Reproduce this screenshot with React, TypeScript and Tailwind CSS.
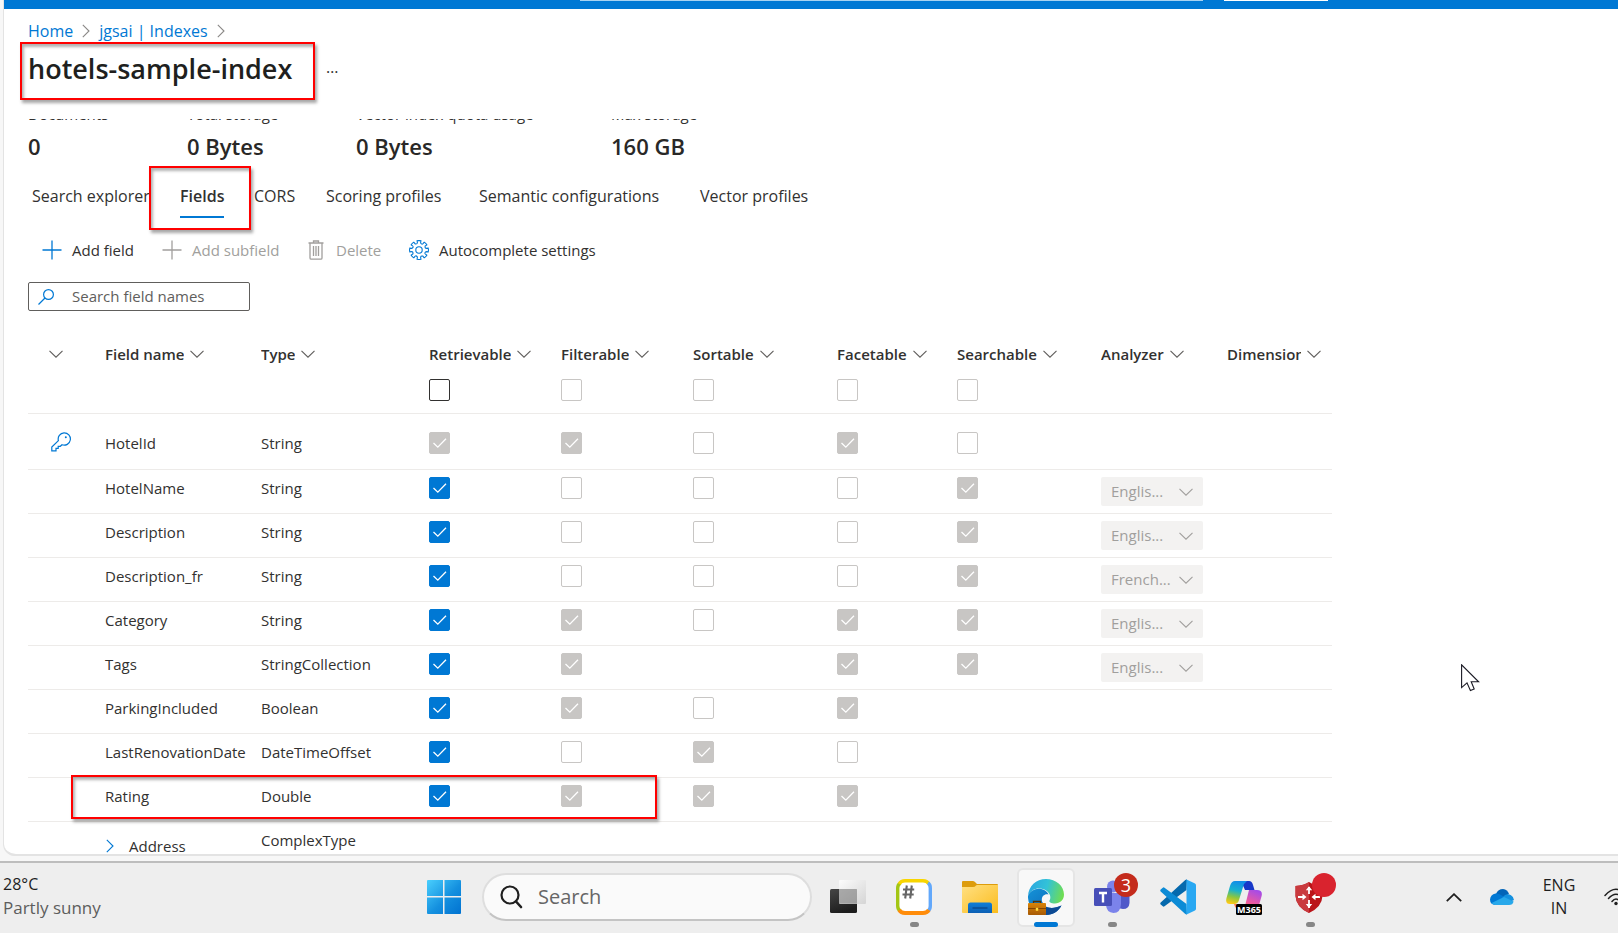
import { useState } from 'react';
import type { ReactNode } from 'react';

type CheckState = 'on' | 'off' | 'locked-on' | 'locked-off' | 'none';

interface Field {
  name: string;
  type: string;
  // retrievable, filterable, sortable, facetable, searchable
  flags: CheckState[];
  analyzer?: string;
  isKey?: boolean;
}

const FLAG_NAMES = ['Retrievable', 'Filterable', 'Sortable', 'Facetable', 'Searchable'];

const FIELDS: Field[] = [
  { name: 'HotelId', type: 'String', flags: ['locked-on', 'locked-on', 'locked-off', 'locked-on', 'locked-off'], isKey: true },
  { name: 'HotelName', type: 'String', flags: ['on', 'locked-off', 'locked-off', 'locked-off', 'locked-on'], analyzer: 'Englis...' },
  { name: 'Description', type: 'String', flags: ['on', 'locked-off', 'locked-off', 'locked-off', 'locked-on'], analyzer: 'Englis...' },
  { name: 'Description_fr', type: 'String', flags: ['on', 'locked-off', 'locked-off', 'locked-off', 'locked-on'], analyzer: 'French...' },
  { name: 'Category', type: 'String', flags: ['on', 'locked-on', 'locked-off', 'locked-on', 'locked-on'], analyzer: 'Englis...' },
  { name: 'Tags', type: 'StringCollection', flags: ['on', 'locked-on', 'none', 'locked-on', 'locked-on'], analyzer: 'Englis...' },
  { name: 'ParkingIncluded', type: 'Boolean', flags: ['on', 'locked-on', 'locked-off', 'locked-on', 'none'] },
  { name: 'LastRenovationDate', type: 'DateTimeOffset', flags: ['on', 'locked-off', 'locked-on', 'locked-off', 'none'] },
  { name: 'Rating', type: 'Double', flags: ['on', 'locked-on', 'locked-on', 'locked-on', 'none'] },
];

const STATS = [
  { label: 'Documents', value: '0' },
  { label: 'Total storage', value: '0 Bytes' },
  { label: 'Vector index quota usage', value: '0 Bytes' },
  { label: 'Max storage', value: '160 GB' },
];

const TABS = ['Search explorer', 'Fields', 'CORS', 'Scoring profiles', 'Semantic configurations', 'Vector profiles'];

function ChevronDown({ className = 'text-[#605e5c]' }: { className?: string }) {
  return (
    <svg viewBox="0 0 14 8" className={`w-3.5 h-2 shrink-0 ${className}`} fill="none" stroke="currentColor" strokeWidth="1.1">
      <path d="M0.5 0.8 L7 7.2 L13.5 0.8" />
    </svg>
  );
}

function ChevronRight({ className }: { className: string }) {
  return (
    <svg viewBox="0 0 8 14" className={`w-2 h-3.5 shrink-0 ${className}`} fill="none" stroke="currentColor" strokeWidth="1.1">
      <path d="M0.8 0.8 L7 7 L0.8 13.2" />
    </svg>
  );
}

function Highlight({ className }: { className: string }) {
  return (
    <div
      className={`absolute z-10 pointer-events-none border-2 border-[#ff0000] shadow-[2px_3px_3px_rgba(0,0,0,0.35),inset_2px_3px_3px_rgba(0,0,0,0.3)] ${className}`}
    />
  );
}

function CheckBox({ state, label }: { state: CheckState; label: string }) {
  const [checked, setChecked] = useState(state === 'on' || state === 'locked-on');
  const locked = state === 'locked-on' || state === 'locked-off';
  return (
    <label className="relative block w-[21px] h-[22px]">
      <input
        type="checkbox"
        aria-label={label}
        checked={checked}
        disabled={locked}
        onChange={() => setChecked(!checked)}
        className="appearance-none block w-[21px] h-[22px] rounded-xs border border-[#323130] bg-white checked:bg-[#0078d4] checked:border-[#0078d4] disabled:border-[#c8c6c4] disabled:checked:bg-[#c8c6c4] disabled:checked:border-[#c8c6c4]"
      />
      {checked && (
        <svg viewBox="0 0 21 22" className="absolute inset-0 pointer-events-none" fill="none" stroke="white" strokeWidth="1.3">
          <path d="M4.5 11 L8.8 15.2 L17 6.8" />
        </svg>
      )}
    </label>
  );
}

function HeaderCell({ children }: { children?: ReactNode }) {
  return (
    <div className="flex items-center gap-1.5 h-[22px]">
      {children && <span className="overflow-hidden whitespace-nowrap">{children}</span>}
      <ChevronDown />
    </div>
  );
}

function KeyIcon() {
  return (
    <svg viewBox="0 0 20 20" className="w-5 h-5 text-[#0078d4]" fill="none" stroke="currentColor" strokeWidth="1.2">
      <path d="M13 0.8 a6.2 6.2 0 1 1 -2 12 L9.3 14.3 H7.2 V16.4 H5 V18.8 H0.8 V15 L7.4 8.6 A6.2 6.2 0 0 1 13 0.8 Z" />
      <circle cx="14.8" cy="5.2" r="1" fill="currentColor" stroke="none" />
    </svg>
  );
}

function PlusIcon() {
  return (
    <svg viewBox="0 0 20 20" className="w-5 h-5" fill="none" stroke="currentColor" strokeWidth="1.3">
      <path d="M10 0.5 V19.5 M0.5 10 H19.5" />
    </svg>
  );
}

function TrashIcon() {
  return (
    <svg viewBox="0 0 16 20" className="w-4 h-5" fill="none" stroke="currentColor" strokeWidth="1.3">
      <path d="M0.5 3 H15.5 M5.5 3 V1 H10.5 V3 M2 3 V18 Q2 19.2 3.2 19.2 H12.8 Q14 19.2 14 18 V3 M5.5 6 V16 M8 6 V16 M10.5 6 V16" />
    </svg>
  );
}

function GearIcon() {
  const teeth = Array.from({ length: 8 }, (_, i) => i * 45);
  return (
    <svg viewBox="-10 -10 20 20" className="w-5 h-5" fill="none" stroke="currentColor" strokeWidth="1.1">
      <circle r="3.2" />
      {teeth.map((angle) => (
        <path key={angle} transform={`rotate(${angle})`} d="M-1.6 -7 L-1.9 -9.2 L0 -9.5 L1.9 -9.2 L1.6 -7 Q2.7 -5.4 3.8 -6.1" />
      ))}
    </svg>
  );
}

function CommandBar() {
  return (
    <div className="flex items-center h-10 mt-1.5 pl-[14px] text-[15px] text-[#323130]">
      <button className="flex items-center gap-2.5 w-[120px] whitespace-nowrap">
        <span className="text-[#0078d4]"><PlusIcon /></span>Add field
      </button>
      <button disabled className="flex items-center gap-2.5 w-[146px] text-[#a19f9d] whitespace-nowrap">
        <PlusIcon />Add subfield
      </button>
      <button disabled className="flex items-center gap-3 w-[101px] text-[#a19f9d] whitespace-nowrap">
        <TrashIcon />Delete
      </button>
      <button className="flex items-center gap-2.5 whitespace-nowrap">
        <span className="text-[#0078d4]"><GearIcon /></span>Autocomplete settings
      </button>
    </div>
  );
}

function FieldsTable() {
  return (
    <table className="table-fixed w-[1304px] mt-8 text-[15px] leading-[22px] text-left text-[#323130]">
      <colgroup>
        <col className="w-[77px]" />
        <col className="w-[156px]" />
        <col className="w-[168px]" />
        <col className="w-[132px]" />
        <col className="w-[132px]" />
        <col className="w-[144px]" />
        <col className="w-[120px]" />
        <col className="w-[144px]" />
        <col className="w-[126px]" />
        <col className="w-[105px]" />
      </colgroup>
      <thead>
        <tr className="h-[70px] border-b border-[#edebe9] align-top">
          <th className="pl-[21px] font-semibold"><HeaderCell /></th>
          <th className="font-semibold"><HeaderCell>Field name</HeaderCell></th>
          <th className="font-semibold"><HeaderCell>Type</HeaderCell></th>
          {FLAG_NAMES.map((flag, i) => (
            <th key={flag} className="font-semibold">
              <HeaderCell>{flag}</HeaderCell>
              <div className="mt-[14px]">
                <CheckBox state={i === 0 ? 'off' : 'locked-off'} label={`${flag} for all fields`} />
              </div>
            </th>
          ))}
          <th className="font-semibold"><HeaderCell>Analyzer</HeaderCell></th>
          <th className="pr-[11px] font-semibold"><HeaderCell>Dimension</HeaderCell></th>
        </tr>
      </thead>
      <tbody>
        <tr className="h-3"><td colSpan={10} /></tr>
        {FIELDS.map((field) => (
          <tr key={field.name} className="h-11 border-b border-[#edebe9] align-top">
            <td className="pl-[23px] pt-[7px]">{field.isKey && <KeyIcon />}</td>
            <td className="relative pt-[7px] whitespace-nowrap">
              {field.name}
              {field.name === 'Rating' && <Highlight className="-left-[34px] -top-[3px] w-[586px] h-11" />}
            </td>
            <td className="pt-[7px]">{field.type}</td>
            {field.flags.map((state, i) => (
              <td key={FLAG_NAMES[i]} className="pt-[7px]">
                {state !== 'none' && <CheckBox state={state} label={`${field.name} ${FLAG_NAMES[i]}`} />}
              </td>
            ))}
            <td className="pt-[7px]">
              {field.analyzer && (
                <div className="relative w-[102px]">
                  <select
                    disabled
                    aria-label={`${field.name} analyzer`}
                    className="appearance-none block w-full h-[29px] pl-2.5 rounded-xs bg-[#f3f2f1] text-[#a19f9d] opacity-100"
                  >
                    <option>{field.analyzer}</option>
                  </select>
                  <ChevronDown className="absolute right-2.5 top-[11px] text-[#a19f9d]" />
                </div>
              )}
            </td>
            <td />
          </tr>
        ))}
        <tr className="align-top">
          <td />
          <td className="pt-[13px] pl-px">
            <button className="flex items-center gap-[15px]">
              <ChevronRight className="text-[#0078d4]" />
              Address
            </button>
          </td>
          <td className="pt-[7px]">ComplexType</td>
          <td colSpan={7} />
        </tr>
      </tbody>
    </table>
  );
}

function IndexPage() {
  const [tab, setTab] = useState('Fields');

  return (
    <div className="relative flex flex-col flex-1 min-h-0 ml-1 mb-[5px] bg-white border-b-2 border-[#e3e3e3] rounded-bl-xl shadow-[-1px_0_0_#e3e3e3] overflow-hidden">
      <header className="h-[9px] shrink-0 bg-[#0078d4]">
        <div className="flex pl-[576px]">
          <div className="w-[623px] h-px bg-[#a6d2f2]" />
          <div className="w-[104px] h-px ml-[21px] bg-white" />
        </div>
      </header>

      <div className="shrink-0 h-[110px] pl-6 pt-[11px]">
        <nav aria-label="Breadcrumb" className="flex items-center h-[22px] gap-[9px] text-base text-[#0078d4]">
          <a href="#home">Home</a>
          <ChevronRight className="text-[#8a8886]" />
          <a href="#indexes">jgsai | Indexes</a>
          <ChevronRight className="text-[#8a8886]" />
        </nav>
        <div className="flex items-center h-[54px]">
          <h1 className="relative w-[298px] text-[27px] leading-10 font-semibold text-[#201f1e] whitespace-nowrap">
            hotels-sample-index
            <Highlight className="-left-2 -top-[7px] w-[295px] h-[58px]" />
          </h1>
          <button aria-label="More" className="pb-1 text-base text-[#323130]">…</button>
        </div>
      </div>

      <div className="flex-1 min-h-0 overflow-hidden pl-6">
        <dl className="grid grid-cols-[159px_169px_255px_1fr] -mt-4">
          {STATS.map((stat) => (
            <div key={stat.label}>
              <dt className="h-[22px] text-[15px] leading-[22px] text-[#323130]">{stat.label}</dt>
              <dd className="mt-[5px] text-[22px] leading-8 font-semibold text-[#292827]">{stat.value}</dd>
            </div>
          ))}
        </dl>

        <div role="tablist" className="grid grid-cols-[148px_74px_72px_153px_221px_1fr] h-[50px] mt-3 pl-1 text-base text-[#323130]">
          {TABS.map((name) => (
            <div key={name} className="relative">
              <button
                role="tab"
                aria-selected={tab === name}
                onClick={() => setTab(name)}
                className={`h-11 pt-px border-b-2 whitespace-nowrap ${
                  tab === name ? 'font-semibold border-[#0078d4]' : 'border-transparent'
                }`}
              >
                {name}
              </button>
              {name === 'Fields' && <Highlight className="-left-[31px] -top-2 w-[102px] h-16" />}
            </div>
          ))}
        </div>

        <CommandBar />

        <div className="flex items-center w-[222px] h-[29px] mt-3 pl-[9px] border border-[#605e5c] rounded-xs">
          <svg viewBox="0 0 16 16" className="w-4 h-4 mr-[18px] shrink-0 text-[#0078d4]" fill="none" stroke="currentColor" strokeWidth="1.2">
            <circle cx="10.5" cy="5.5" r="4.9" />
            <path d="M7 9 L0.5 15.5" />
          </svg>
          <input
            aria-label="Search field names"
            placeholder="Search field names"
            className="w-full min-w-0 bg-transparent text-[15px] placeholder:text-[#605e5c] outline-none"
          />
        </div>

        <FieldsTable />
      </div>
    </div>
  );
}

function TaskButton({ label, children, indicator, active }: {
  label: string;
  children: ReactNode;
  indicator?: boolean;
  active?: boolean;
}) {
  return (
    <button
      aria-label={label}
      className={`relative flex items-center justify-center w-[58px] h-[59px] mx-1 rounded-md ${
        active ? 'bg-[#f8f8f8] border-2 border-[#e5e5e5]' : ''
      }`}
    >
      {children}
      {indicator && <span className="absolute bottom-0 w-[9px] h-[5px] rounded-full bg-[#868686]" />}
      {active && <span className="absolute -bottom-0.5 w-6 h-[5px] rounded-full bg-[#0078d4]" />}
    </button>
  );
}

function WindowsLogo() {
  return (
    <svg viewBox="0 0 36 36" className="w-9 h-9">
      <defs>
        <linearGradient id="win" gradientUnits="userSpaceOnUse" x1="0" y1="0" x2="36" y2="36">
          <stop offset="0" stopColor="#4cd2ff" />
          <stop offset="0.55" stopColor="#1490df" />
          <stop offset="1" stopColor="#0070d0" />
        </linearGradient>
      </defs>
      <g fill="url(#win)">
        <path d="M1 2 Q1 1 2 1 H17 V17 H1 Z" />
        <path d="M18.5 1 H34 Q35 1 35 2 V17 H18.5 Z" />
        <path d="M1 18.5 H17 V35 H2 Q1 35 1 34 Z" />
        <path d="M18.5 18.5 H35 V34 Q35 35 34 35 H18.5 Z" />
      </g>
    </svg>
  );
}

function TaskViewLogo() {
  return (
    <svg viewBox="0 0 36 36" className="w-9 h-9">
      <defs>
        <linearGradient id="tvd" x1="0" y1="0" x2="0.4" y2="1">
          <stop offset="0" stopColor="#464646" />
          <stop offset="1" stopColor="#1d1d1d" />
        </linearGradient>
        <linearGradient id="tvl" x1="0" y1="0" x2="1" y2="1">
          <stop offset="0" stopColor="#ffffff" />
          <stop offset="1" stopColor="#cfcfcf" />
        </linearGradient>
      </defs>
      <rect y="10" width="27" height="24" rx="1.5" fill="url(#tvd)" />
      <rect x="9" y="1" width="27" height="24" rx="1" fill="url(#tvl)" opacity="0.82" />
      <path d="M9 10 H27 V24.5 H9 Z" fill="#8c8c8c" opacity="0.6" />
    </svg>
  );
}

function HashLogo() {
  return (
    <svg viewBox="0 0 36 36" className="w-9 h-9" fill="none">
      <rect x="2" y="2" width="32" height="32" rx="7" fill="white" />
      <path d="M4.5 32 Q1.7 30.5 1.7 27 V9 Q1.7 5.5 4.5 4" stroke="#a3c614" strokeWidth="3.4" />
      <path d="M3.2 4.8 Q5 1.7 9 1.7 H27 Q31 1.7 32.8 4.8" stroke="#f8d500" strokeWidth="3.4" />
      <path d="M32 4 Q34.3 5.5 34.3 9 V27 Q34.3 30.5 32 32" stroke="#62a8fb" strokeWidth="3.4" />
      <path d="M3.2 31 Q5 34 9 34 H27 Q31 34 32.8 31" stroke="#ff8c0a" strokeWidth="4" />
      <path d="M10.8 6.5 L9.2 19.5 M15.8 6.5 L14.2 19.5 M7 10.5 H18.2 M6.5 15.5 H17.700" stroke="#666" strokeWidth="2.1" />
    </svg>
  );
}

function FolderLogo() {
  return (
    <svg viewBox="0 0 36 34" className="w-9 h-[34px]">
      <defs>
        <linearGradient id="fold" x1="0" y1="0" x2="1" y2="1">
          <stop offset="0" stopColor="#ffe083" />
          <stop offset="1" stopColor="#fbbc1c" />
        </linearGradient>
        <linearGradient id="foldb" x1="0" y1="0" x2="0" y2="1">
          <stop offset="0" stopColor="#0f7fd8" />
          <stop offset="1" stopColor="#0c5fb4" />
        </linearGradient>
      </defs>
      <path d="M0 2 Q0 1 1 1 H11 Q12.5 1 13.5 2.5 L15 4 H35 Q36 4 36 5 V12 H0 Z" fill="#dd9c0c" />
      <path d="M0 7 H11 Q13 7 14 5.5 L15 5 H36 V33 H1 Q0 33 0 32 Z" fill="url(#fold)" />
      <path d="M6 33 V25 Q6 22.5 8.5 22.5 H27.5 Q30 22.5 30 25 V33 Z" fill="url(#foldb)" />
      <path d="M11 28 H25" stroke="#0a4c93" strokeWidth="1.4" strokeLinecap="round" />
    </svg>
  );
}

function EdgeLogo() {
  return (
    <svg viewBox="0 0 36 36" className="w-9 h-9">
      <defs>
        <linearGradient id="edgeTop" x1="0" y1="0.3" x2="1" y2="0.5">
          <stop offset="0" stopColor="#2ba7e0" />
          <stop offset="0.5" stopColor="#32c2d8" />
          <stop offset="1" stopColor="#6fdd52" />
        </linearGradient>
        <linearGradient id="edgeMid" x1="0" y1="0" x2="1" y2="1">
          <stop offset="0" stopColor="#1593d8" />
          <stop offset="1" stopColor="#0b5fb0" />
        </linearGradient>
        <linearGradient id="case" x1="0" y1="0" x2="0" y2="1">
          <stop offset="0" stopColor="#d98408" />
          <stop offset="1" stopColor="#a75a05" />
        </linearGradient>
      </defs>
      <path d="M0 17 C0.5 7 8 0 18 0 C28 0 36 7 36 15.5 C36 21 32 24.5 27 24.5 C23 24.5 20.5 23 21.5 21.5 C23.5 18.5 22 14 18 11.5 C11 7.5 3 10 0 17 Z" fill="url(#edgeTop)" />
      <path d="M0 17 C2 10.5 11 7.5 17 11.5 C19 12.8 20 14 20.5 15.5 C16 14.5 13 18 14 22.5 C15.5 29 24 31 33.5 26.5 C30 32.5 25 36 18 36 C8 36 -0.5 28 0 17 Z" fill="url(#edgeMid)" />
      <path d="M14 22.5 C15.5 29 24 31 33.5 26.5 C30 32.5 25 36 18 36 V29 Z" fill="#0d4a93" />
      <path d="M5.5 24.5 V22.5 H12.5 V24.5" fill="none" stroke="#553008" strokeWidth="1.3" />
      <rect y="24" width="18" height="12" rx="0.8" fill="url(#case)" />
      <path d="M0 29.5 H18" stroke="#7c4103" strokeWidth="0.9" />
      <rect x="7.8" y="28.8" width="2.4" height="3" fill="#ffd83c" />
    </svg>
  );
}

function TeamsLogo() {
  return (
    <svg viewBox="0 0 36 34" className="w-9 h-[34px]">
      <circle cx="19" cy="6.5" r="6" fill="#7b83eb" />
      <circle cx="30" cy="8" r="4" fill="#5059c9" />
      <path d="M25 13 H35.5 V23 Q35 29 29 29 Q26 29 24 27 Z" fill="#5059c9" />
      <path d="M14 13 H27 V24 Q26.5 33 19.5 33 Q12.5 32.5 12 25 Z" fill="#7b83eb" />
      <rect y="8" width="18" height="18" rx="1.5" fill="#474fb8" />
      <path d="M5 13 H13 M9 13 V22.5" stroke="white" strokeWidth="2.4" fill="none" />
    </svg>
  );
}

function VsCodeLogo() {
  return (
    <svg viewBox="0 0 36 36" className="w-9 h-9">
      <path d="M26.5 11 L4.5 27.3 Q3.6 28 2.8 27.3 L0.7 25.4 Q-0.2 24.5 0.7 23.6 L25 1.2 Q26 0.3 27 0.5 Z" fill="#0569ad" />
      <path d="M26.500 25 L4.5 8.7 Q3.6 8 2.8 8.7 L0.700 10.6 Q-0.2 11.500 0.700 12.400 L25 34.800 Q26 35.700 27 35.500 Z" fill="#0c8bd6" />
      <path d="M26.500 0.500 L35 4.600 Q36 5.100 36 6.200 V29.800 Q36 30.900 35 31.400 L26.500 35.500 Z" fill="#29a8f2" />
    </svg>
  );
}

function CopilotLogo() {
  return (
    <svg viewBox="0 0 36 35" className="w-9 h-[35px]">
      <defs>
        <linearGradient id="cpl" x1="0.5" y1="0" x2="0.3" y2="1">
          <stop offset="0" stopColor="#128de8" />
          <stop offset="0.4" stopColor="#18b2cf" />
          <stop offset="0.7" stopColor="#8cc63f" />
          <stop offset="1" stopColor="#ffc915" />
        </linearGradient>
        <linearGradient id="cpr" x1="0.7" y1="0" x2="0.3" y2="1">
          <stop offset="0" stopColor="#a54be8" />
          <stop offset="0.6" stopColor="#ee5b9d" />
          <stop offset="1" stopColor="#ff8a4c" />
        </linearGradient>
      </defs>
      <path d="M15 1 H23 Q26 1 27 5 L28.5 10 H19 Z" fill="#1737c8" />
      <path d="M9 1 H21 Q18 3 17 7 L13 20 Q12 24 8 24 H4 Q-1 24 0.5 18 L4 6 Q5.5 1 9 1 Z" fill="url(#cpl)" />
      <path d="M23 10 H31 Q37 10 35.6 16 L32.5 27 Q31 32 27 32 H15 Q18 30 19 26 Z" fill="url(#cpr)" />
      <path d="M8 24 H12 L11 29 Q9 28 8 24 Z" fill="#ff7a50" />
      <rect x="10" y="24" width="26" height="11" rx="1.5" fill="black" />
      <text x="23" y="33" textAnchor="middle" fontSize="9" fontWeight="700" fill="white" fontFamily="Open Sans, sans-serif">M365</text>
    </svg>
  );
}

function ShieldLogo() {
  return (
    <svg viewBox="0 0 28 31" className="w-7 h-[31px] mr-0.5" fill="none">
      <path d="M14 0 Q19 3.5 27.5 4 V14 Q27 25 14 31 Q1 25 0.5 14 V4 Q9 3.5 14 0 Z" fill="#ba1419" />
      <path d="M14 0 V31 Q1 25 0.5 14 V4 Q9 3.5 14 0 Z" fill="#c93a3e" />
      <path d="M14 5 V12 M14 18 V26 M3 15 H10 M18 15 H25" stroke="white" strokeWidth="1.8" />
      <path d="M10.8 8.200 L14 4.200 L17.2 8.200 Z M10.8 22 L14 26 L17.2 22 Z M7.500 11.800 L11.5 15 L7.500 18.2 Z M20.500 11.800 L16.5 15 L20.500 18.2 Z" fill="white" />
    </svg>
  );
}

function OneDriveLogo() {
  return (
    <svg viewBox="0 0 24 16" className="w-6 h-4">
      <path d="M6 5 Q8 0 13 0 Q17.5 0.5 19 5 L12 9 Z" fill="#0364b8" />
      <path d="M5.5 16 Q0 15.5 0 10.5 Q0.5 5.5 5.5 4.5 Q8.5 4 11 6 L16 9 L6 14 Z" fill="#0078d4" />
      <path d="M12 9 L15 6 Q18 4.2 21 6.2 Q24 8 24 11 L20 13 Z" fill="#1490df" />
      <path d="M1.6 14 L14 8 L23.6 12.5 Q22.8 16 19 16 H5.5 Q3 16 1.6 14 Z" fill="#28a8ea" />
    </svg>
  );
}

function WifiIcon() {
  return (
    <svg viewBox="0 0 24 18" className="w-6 h-[18px] shrink-0" fill="none" stroke="#1f1f1f" strokeWidth="1.5" strokeLinecap="round">
      <path d="M1 7.5 Q12 -5 23 7.5 M4.5 10.5 Q12 2 19.5 10.5 M8 13.5 Q12 8.5 16 13.5" />
      <circle cx="12" cy="15.5" r="1.7" fill="#1f1f1f" stroke="none" />
    </svg>
  );
}

function Taskbar() {
  return (
    <footer className="flex items-center shrink-0 h-[72px] pb-0.5 bg-[#eeeeee] border-t-2 border-[#bdbdbd] overflow-hidden whitespace-nowrap">
      <div className="w-[426px] pl-[3px] pb-0.5 leading-6">
        <p className="text-base leading-6 text-[#1f1f1f]">28°C</p>
        <p className="text-[17px] leading-6 text-[#5d5d5d]">Partly sunny</p>
      </div>

      <button aria-label="Start"><WindowsLogo /></button>
      <label className="flex items-center w-[330px] h-12 ml-5 mr-[3px] pl-4 rounded-full bg-[#fafafa] border-2 border-[#dedede] border-b-[#c4c4c4]">
        <svg viewBox="0 0 23 24" className="w-[23px] h-6 mr-[15px] shrink-0" fill="none" stroke="#1f1f1f" strokeWidth="2.2" strokeLinecap="round">
          <circle cx="10" cy="10" r="8.5" />
          <path d="M16 16.5 L21 22" strokeWidth="2.6" />
        </svg>
        <input aria-label="Search" placeholder="Search" className="w-full min-w-0 bg-transparent text-xl placeholder:text-[#666666] outline-none" />
      </label>

      <TaskButton label="Task view"><TaskViewLogo /></TaskButton>
      <TaskButton label="Notes" indicator><HashLogo /></TaskButton>
      <TaskButton label="File Explorer"><FolderLogo /></TaskButton>
      <TaskButton label="Edge" active><EdgeLogo /></TaskButton>
      <TaskButton label="Teams" indicator>
        <TeamsLogo />
        <span className="absolute right-[3px] top-[5px] w-6 h-6 rounded-full bg-[#c42b1c] text-white text-lg leading-6 text-center">3</span>
      </TaskButton>
      <TaskButton label="Visual Studio Code"><VsCodeLogo /></TaskButton>
      <TaskButton label="Copilot"><CopilotLogo /></TaskButton>
      <TaskButton label="Defender" indicator>
        <ShieldLogo />
        <span className="absolute right-[3px] top-[5px] w-6 h-6 rounded-full bg-[#d9232e]" />
      </TaskButton>

      <div className="flex items-center shrink-0 ml-auto -mr-2.5">
        <button aria-label="Show hidden icons">
          <svg viewBox="0 0 16 9" className="w-4 h-[9px]" fill="none" stroke="#1f1f1f" strokeWidth="1.8">
            <path d="M0.8 8.2 L8 1.2 L15.2 8.2" />
          </svg>
        </button>
        <button aria-label="OneDrive" className="ml-7"><OneDriveLogo /></button>
        <div className="w-[34px] ml-7 mr-7 text-base leading-[23px] text-center text-[#1f1f1f]">
          <p>ENG</p>
          <p>IN</p>
        </div>
        <WifiIcon />
      </div>
    </footer>
  );
}

export default function App() {
  return (
    <div className="relative flex flex-col h-screen overflow-hidden bg-[#f7f7f7] font-['Open_Sans','Noto_Sans',sans-serif]">
      <IndexPage />
      <Taskbar />
      <svg viewBox="0 0 19 28" className="absolute left-[1461px] top-[664px] w-[19px] h-7 pointer-events-none" fill="white" stroke="#1a1a24" strokeWidth="1.1">
        <path d="M0.6 0.8 V23.6 L6 18.8 L9.4 26.5 L13.2 25 L10.2 17.8 H17.6 Z" />
      </svg>
    </div>
  );
}
